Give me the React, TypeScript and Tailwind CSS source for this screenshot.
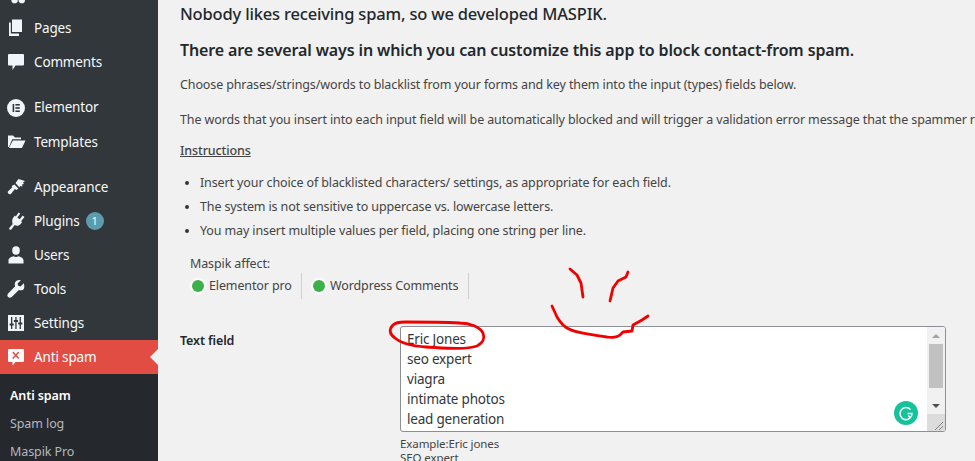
import React from "react";

const W = "#f0f5fa";

const icons: Record<string, React.ReactNode> = {
  pages: (
    <g fill={W}>
      <path d="M6 1.500h10v12.500H6z" />
      <path d="M3 4.500h1.800v11H13v2.500H3z" />
    </g>
  ),
  comments: <path fill={W} d="M3 2h14a1 1 0 0 1 1 1v9.500a1 1 0 0 1-1 1h-7.500L6.500 18v-4.500H3a1 1 0 0 1-1-1V3a1 1 0 0 1 1-1z" />,
  elementor: (
    <g>
      <circle cx="10" cy="10" r="9" fill={W} />
      <rect x="6.600" y="6" width="1.600" height="8" fill="#32373c" />
      <rect x="9.400" y="6" width="4.400" height="1.600" fill="#32373c" />
      <rect x="9.400" y="9.200" width="4.400" height="1.600" fill="#32373c" />
      <rect x="9.400" y="12.400" width="4.400" height="1.600" fill="#32373c" />
    </g>
  ),
  templates: (
    <g fill={W}>
      <path d="M2 15V3.500h5l2 2h6v1.800H6.200L3 15z" />
      <path d="M6.800 8.500H19.500L16 16H3z" />
    </g>
  ),
  appearance: (
    <g fill={W}>
      <path d="M12.500 2l6.500 2-2 1.500 1 1.500-2 .5.500 2-2.500-.5-.5 1.500L9.500 6z" />
      <path d="M8.400 7.500l4 4-2 1.500-1.500-1-4 5c-1 1-4-.6-3-2.400l4.400-4.400-.6-1.200z" />
    </g>
  ),
  plugins: (
    <g fill={W}>
      <path d="M12.500 1.500l1.800 1.300-3 3.700 2.400 1.800 3-3.700 1.800 1.300-3.400 4.300 1 .9-1.400 1.800c-1.800 2-4.200 2.200-6 1.200l-3.400 4.300c-.8 1-2.800-.4-2-1.500l3.400-3.900C5.800 10.400 6 8 7.400 6.400L8.800 4.600l1 .8z" />
    </g>
  ),
  users: (
    <g fill={W}>
      <ellipse cx="10" cy="5.500" rx="3.800" ry="4.200" />
      <path d="M2.500 15.500c0-2.600 3-3.600 5-4.200 1.600 1 3.400 1 5 0 2 .6 5 1.600 5 4.200V18.500h-15z" />
    </g>
  ),
  tools: (
    <path fill={W} d="M17.800 4.200l-3.200 3.200-2.400-.6-.6-2.400L14.800 1.200c-2.400-.6-5 .2-5.800 2.600-.4 1.200-.3 2.400.2 3.500L2.100 14.500c-1 1.100-1 2.600 0 3.600s2.600 1 3.600 0l7.200-7.200c1.100.5 2.300.6 3.500.2 2.400-.9 2.100-4.400 1.400-6.900z" />
  ),
  settings: (
    <g>
      <rect x="2" y="2" width="16" height="16" fill={W} />
      <g fill="#32373c">
        <rect x="5" y="4" width="1.300" height="12" />
        <rect x="3.600" y="10.500" width="4.100" height="2" />
        <rect x="9.300" y="4" width="1.300" height="12" />
        <rect x="7.900" y="7" width="4.100" height="2" />
        <rect x="13.600" y="4" width="1.300" height="12" />
        <rect x="12.200" y="9.500" width="4.100" height="2" />
      </g>
    </g>
  ),
  antispam: (
    <g>
      <path fill="#fff" d="M3 2h14a1 1 0 0 1 1 1v11a1 1 0 0 1-1 1H9.500l-3 3.500V15H3a1 1 0 0 1-1-1V3a1 1 0 0 1 1-1z" />
      <path stroke="#e14d43" strokeWidth="1.500" d="M6.800 5l6 6.500M12.800 5l-6 6.500" />
    </g>
  ),
};

function Item({ icon, label, children, gapTop, tall }: { icon: string; label: string; children?: React.ReactNode; gapTop?: boolean; tall?: boolean }) {
  return (
    <div className={`flex shrink-0 items-center text-[13.500px] tracking-[-0.15px] text-[#f6f8fa] ${tall ? "h-[35px]" : "h-[34px]"} ${gapTop ? "mt-[11px]" : ""}`}>
      <svg viewBox="0 0 20 20" className="ml-[6px] h-[20px] w-[20px] shrink-0">
        {icons[icon]}
      </svg>
      <span className="ml-[8px]">{label}</span>
      {children}
    </div>
  );
}

function Sidebar() {
  return (
    <aside className="flex h-[461px] w-[158px] shrink-0 flex-col overflow-hidden bg-[#32373c]">
      <div className="flex h-[11px] shrink-0 items-start overflow-hidden">
        <svg viewBox="0 0 20 4" className="ml-[11px] h-[4px] w-[18px]">
          <circle cx="4" cy="0" r="3.500" fill={W} />
          <circle cx="12" cy="0" r="3.500" fill={W} />
        </svg>
      </div>
      <Item icon="pages" label="Pages" />
      <Item icon="comments" label="Comments" />
      <Item icon="elementor" label="Elementor" gapTop tall />
      <Item icon="templates" label="Templates" />
      <Item icon="appearance" label="Appearance" gapTop />
      <Item icon="plugins" label="Plugins">
        <span className="ml-[6px] flex h-[18px] w-[18px] items-center justify-center rounded-full bg-[#5b9dae] text-[11px] text-white">1</span>
      </Item>
      <Item icon="users" label="Users" />
      <Item icon="tools" label="Tools" />
      <Item icon="settings" label="Settings" />
      <div className="relative flex h-[34px] shrink-0 items-center bg-[#e14d43] text-[13.500px] tracking-[-0.15px] text-white">
        <svg viewBox="0 0 20 20" className="ml-[6px] h-[20px] w-[20px] shrink-0">
          {icons.antispam}
        </svg>
        <span className="ml-[8px]">Anti spam</span>
        <span className="absolute right-0 top-[9px] h-0 w-0 border-y-[8px] border-r-[8px] border-y-transparent border-r-[#f1f1f1]" />
      </div>
      <div className="flex flex-1 flex-col bg-[#25282d] pt-[8px] text-[12.500px] tracking-[-0.1px] text-[#b4b9be]">
        <div className="flex h-[28px] shrink-0 items-center pl-[10px] font-semibold text-white">Anti spam</div>
        <div className="flex h-[28px] shrink-0 items-center pl-[10px]">Spam log</div>
        <div className="flex h-[28px] shrink-0 items-center pl-[10px]">Maspik Pro</div>
      </div>
    </aside>
  );
}

function Bullet({ children }: { children: React.ReactNode }) {
  return (
    <li className="flex h-[24px] items-center">
      <span className="ml-[5px] mr-[11px] h-[4px] w-[4px] rounded-full bg-[#32373c]" />
      {children}
    </li>
  );
}

function Affect({ label, wide }: { label: string; wide: string }) {
  return (
    <div className={`flex h-[26px] items-center border-r border-[#cfcfcf] ${wide}`}>
      <span className="ml-[1px] mr-[5px] h-[12px] w-[12px] rounded-full bg-[#3cb14a] shadow-[0_0_0_2px_#fff]" />
      <span>{label}</span>
    </div>
  );
}

function Scroller() {
  return (
    <div className="flex w-[18px] shrink-0 flex-col items-center bg-[#f1f1f1]">
      <div className="flex h-[17px] items-center justify-center">
        <span className="h-0 w-0 border-x-[4px] border-b-[4px] border-x-transparent border-b-[#a3a3a3]" />
      </div>
      <div className="h-[44px] w-[14px] bg-[#c1c1c1]" />
      <div className="flex-1" />
      <div className="flex h-[17px] items-center justify-center">
        <span className="h-0 w-0 border-x-[4px] border-t-[4px] border-x-transparent border-t-[#505050]" />
      </div>
      <div className="relative h-[17px] w-full bg-[#dcdcdc]">
        <svg viewBox="0 0 18 17" className="absolute inset-0 h-full w-full">
          <path d="M8 16l8-8M12 16l4-4" stroke="#6b6b6b" strokeWidth="0.800" />
        </svg>
      </div>
    </div>
  );
}

export default function App() {
  return (
    <div
      className="relative flex h-[461px] w-[975px] overflow-hidden bg-[#f1f1f1] text-[12.500px] tracking-[-0.12px] text-[#444]"
      style={{ fontFamily: '"Noto Sans", "Open Sans", sans-serif' }}
    >
      <Sidebar />
      <main className="min-w-0 flex-1 overflow-hidden whitespace-nowrap pl-[22px] pt-[1px]">
        <h1 className="text-[16.500px] font-medium leading-[26px] tracking-[-0.18px] text-[#23282d]">Nobody likes receiving spam, so we developed MASPIK.</h1>
        <h2 className="mt-[10px] text-[16px] font-semibold leading-[26px] tracking-[-0.13px] text-[#23282d]">There are several ways in which you can customize this app to block contact-from spam.</h2>
        <p className="mt-[12px] leading-[20px]">Choose phrases/strings/words to blacklist from your forms and key them into the input (types) fields below.</p>
        <p className="mt-[15px] leading-[20px]">The words that you insert into each input field will be automatically blocked and will trigger a validation error message that the spammer receives.</p>
        <p className="mt-[11px] font-medium leading-[20px] underline">Instructions</p>
        <ul className="mt-[10px]">
          <Bullet>Insert your choice of blacklisted characters/ settings, as appropriate for each field.</Bullet>
          <Bullet>The system is not sensitive to uppercase vs. lowercase letters.</Bullet>
          <Bullet>You may insert multiple values per field, placing one string per line.</Bullet>
        </ul>
        <div className="ml-[10px] mt-[12px] leading-[18px]">Maspik affect:</div>
        <div className="ml-[11px] flex">
          <Affect label="Elementor pro" wide="w-[111px]" />
          <div className="ml-[10px]">
            <Affect label="Wordpress Comments" wide="w-[157px]" />
          </div>
        </div>
        <div className="mt-[27px] flex">
          <div className="w-[220px] pt-[5px] font-semibold leading-[20px] text-[#23282d]">Text field</div>
          <div>
            <div className="relative flex h-[106px] w-[546px] overflow-hidden rounded-[3px] border border-[#8c8f94] bg-white">
              <div className="flex-1 px-[6px] pt-[2px] text-[13.500px] leading-[20px] tracking-[-0.2px] text-[#32373c]">
                <div>Eric Jones</div>
                <div>seo expert</div>
                <div>viagra</div>
                <div>intimate photos</div>
                <div>lead generation</div>
              </div>
              <Scroller />
              <div className="absolute bottom-[6px] right-[27px] flex h-[24px] w-[24px] items-center justify-center rounded-full bg-[#15c39a]">
                <svg viewBox="0 0 24 24" className="h-[18px] w-[18px]" fill="none" stroke="#fff" strokeWidth="2">
                  <path d="M18 7.500A8 8 0 1 0 20 12.500h-6" />
                  <path d="M15 15.500l3.500 3" />
                </svg>
              </div>
            </div>
            <div className="mt-[5px] text-[11.500px] leading-[14px] tracking-[-0.1px]">Example:Eric jones</div>
            <div className="text-[11.500px] leading-[14px] tracking-[-0.1px]">SEO expert</div>
          </div>
        </div>
      </main>
      <svg className="pointer-events-none absolute inset-0 h-[461px] w-[975px]" viewBox="0 0 975 461" fill="none" stroke="#f00000" strokeWidth="2.800" strokeLinecap="round" strokeLinejoin="round">
        <path d="M393 325 C389 329 389 334 395 338 C402 344 412 346 426 347 C445 348 465 350 477 346 C483 343 485 338 483 333 C480 327 470 323 460 323 C440 322 420 322 405 322 C399 322 395 323 393 325 Z" />
        <path d="M552 306 L557 317 C560 322 564 327 569 329 C575 333 590 334 607 337 C612 338 618 337 620 335 L623 332 L632 331 L633 325 L642 320 L648 316" />
        <path d="M570 269 L577 275 L581 283 L583 297" />
        <path d="M628 272 L626 277 L618 281 L613 288 L610 301" />
      </svg>
    </div>
  );
}
